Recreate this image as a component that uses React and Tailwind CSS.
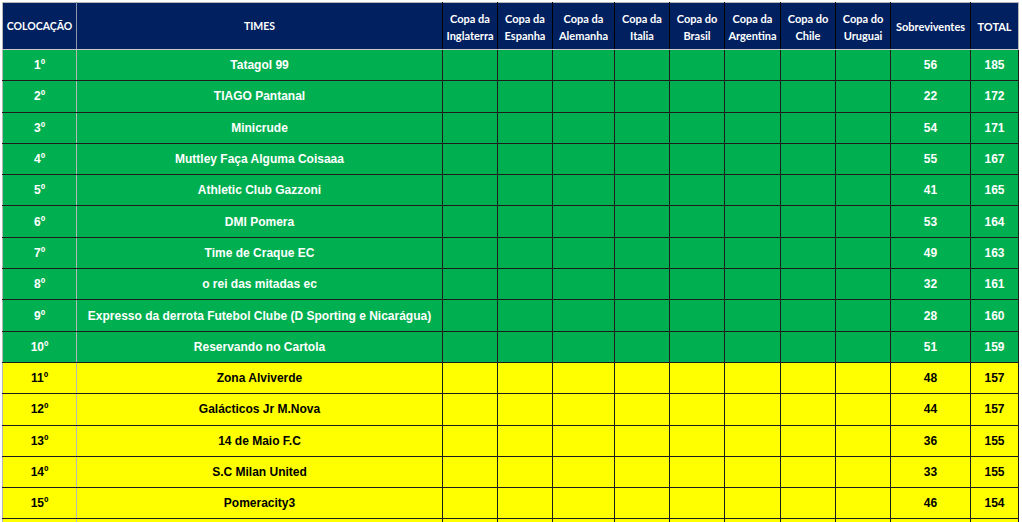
import React from 'react';

const cups = [
  ['Copa da', 'Inglaterra'],
  ['Copa da', 'Espanha'],
  ['Copa da', 'Alemanha'],
  ['Copa da', 'Italia'],
  ['Copa do', 'Brasil'],
  ['Copa da', 'Argentina'],
  ['Copa do', 'Chile'],
  ['Copa do', 'Uruguai'],
];

const colWidths = [74, 366, 55, 55, 62, 55, 55, 56, 55, 55, 80, 48];

const teams = [
  ['Tatagol 99', 56, 185],
  ['TIAGO Pantanal', 22, 172],
  ['Minicrude', 54, 171],
  ['Muttley Faça Alguma Coisaaa', 55, 167],
  ['Athletic Club Gazzoni', 41, 165],
  ['DMI Pomera', 53, 164],
  ['Time de Craque EC', 49, 163],
  ['o rei das mitadas ec', 32, 161],
  ['Expresso da derrota Futebol Clube (D Sporting e Nicarágua)', 28, 160],
  ['Reservando no Cartola', 51, 159],
  ['Zona Alviverde', 48, 157],
  ['Galácticos Jr M.Nova', 44, 157],
  ['14 de Maio F.C', 36, 155],
  ['S.C Milan United', 33, 155],
  ['Pomeracity3', 46, 154],
  ['', '', ''],
];

const App = () => {
  return (
    <div className="w-[1022px] h-[522px] overflow-hidden bg-white pt-[2px] pl-[2px]">
      <table
        className="table-fixed border-collapse border border-[#b7b7b7]"
        style={{ width: colWidths.reduce((a, b) => a + b, 0) + 1 }}
      >
        <colgroup>
          {colWidths.map((w, i) => (
            <col key={i} style={{ width: w }} />
          ))}
        </colgroup>
        <thead>
          <tr className="h-[47px] bg-[#002060] text-white font-bold text-[11px] leading-[17px] font-['Lato','Open_Sans',sans-serif]">
            <th className="border-r border-[#8d96ad] border-b border-b-[#c9c9c9] text-center text-[10.5px]">COLOCAÇÃO</th>
            <th className="border-r border-black border-b border-b-[#c9c9c9] text-center text-[10.5px]">TIMES</th>
            {cups.map((c, i) => (
              <th key={i} className="border-r border-black border-b border-b-[#c9c9c9] text-center whitespace-nowrap pt-[1px]">
                {c[0]}
                <br />
                {c[1]}
              </th>
            ))}
            <th className="border-r border-black border-b border-b-[#c9c9c9] text-center">Sobreviventes</th>
            <th className="border-b border-b-[#c9c9c9] text-center">TOTAL</th>
          </tr>
        </thead>
        <tbody className="font-['Liberation_Sans',Arial,sans-serif] font-bold text-[12px]">
          {teams.map((t, i) => {
            const green = i < 10;
            const rowCls = green ? 'bg-[#00b050] text-white' : 'bg-[#ffff00] text-black';
            return (
              <tr key={i} className={`h-[31.3px] ${rowCls}`}>
                <td className="border-r border-[#b7b7b7] border-b border-b-[#1c1c1c] text-center">
                  {t[0] !== '' ? `${i + 1}º` : ''}
                </td>
                <td className="border border-[#1c1c1c] text-center whitespace-nowrap">{t[0]}</td>
                {cups.map((c, j) => (
                  <td key={j} className="border border-[#1c1c1c]" />
                ))}
                <td className="border border-[#1c1c1c] text-center">{t[1]}</td>
                <td className="border border-[#1c1c1c] text-center">{t[2]}</td>
              </tr>
            );
          })}
        </tbody>
      </table>
    </div>
  );
};

export default App;
